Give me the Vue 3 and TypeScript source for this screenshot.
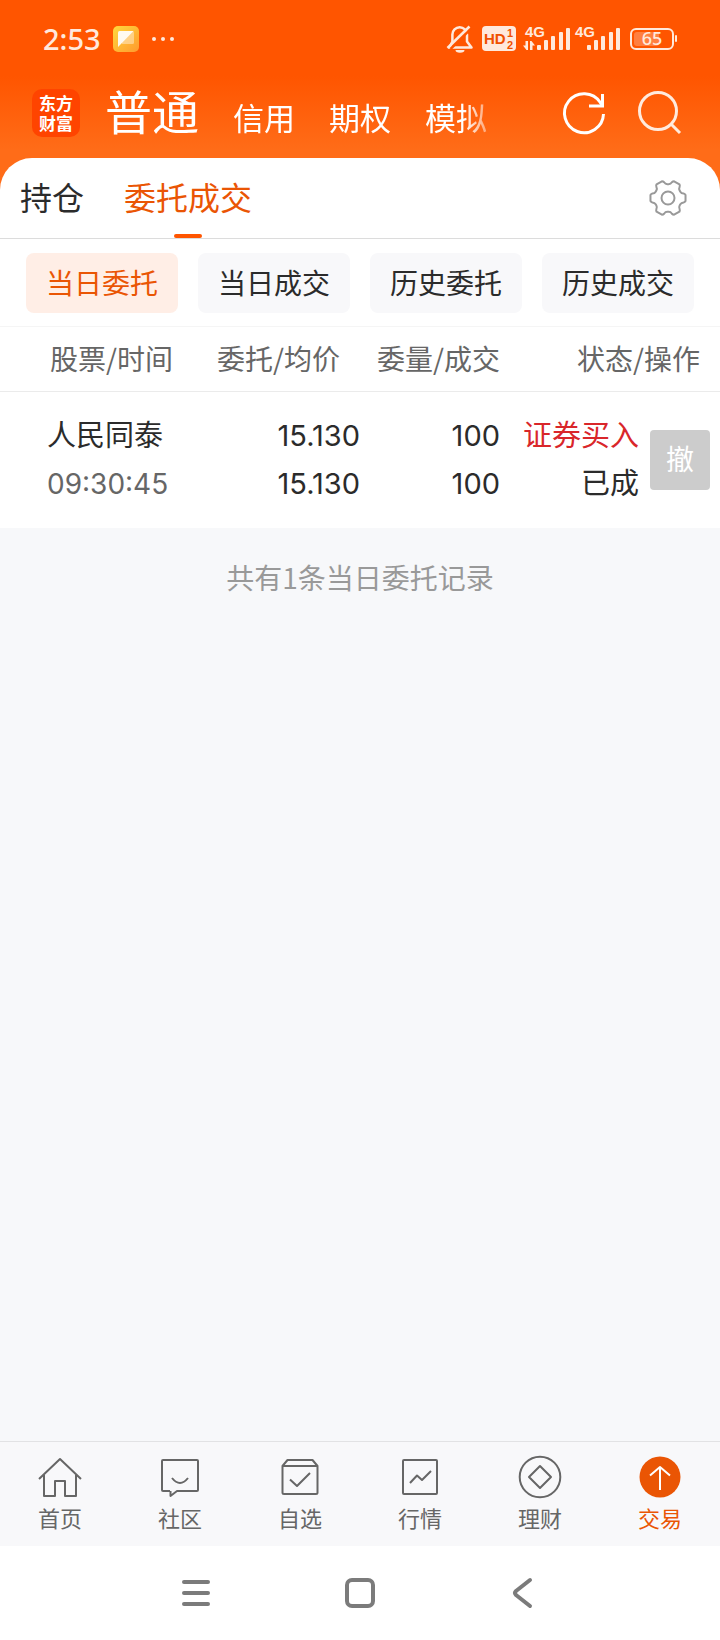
<script setup lang="ts">
import { ref } from 'vue'

interface Order {
  name: string
  time: string
  price: string
  average: string
  amount: number
  filled: number
  side: string
  status: string
}

const accounts: string[] = ['普通', '信用', '期权', '模拟']
const account = ref('普通')

const tabs: string[] = ['持仓', '委托成交']
const tab = ref('委托成交')

const filters: string[] = ['当日委托', '当日成交', '历史委托', '历史成交']
const filter = ref('当日委托')

const orders: Order[] = [
  {
    name: '人民同泰',
    time: '09:30:45',
    price: '15.130',
    average: '15.130',
    amount: 100,
    filled: 100,
    side: '证券买入',
    status: '已成',
  },
]

const bars = [
  { x: 91, h: 5 },
  { x: 98, h: 10 },
  { x: 105, h: 14 },
  { x: 113, h: 18 },
  { x: 120, h: 22 },
]

function polar(deg: number, r: number): string {
  const a = (deg * Math.PI) / 180
  return `${(20 + r * Math.cos(a)).toFixed(2)} ${(20 + r * Math.sin(a)).toFixed(2)}`
}

// Six flat-topped teeth joined by concave notches
function gearPath(): string {
  let d = `M${polar(-10, 17.8)}`
  for (let k = 0; k < 6; k++) {
    const a = k * 60
    d += `L${polar(a + 10, 17.8)}`
    d += `Q${polar(a + 14, 17.4)} ${polar(a + 16, 16.2)}`
    d += `C${polar(a + 20, 13.6)} ${polar(a + 25, 14)} ${polar(a + 30, 13.8)}`
    d += `C${polar(a + 35, 14)} ${polar(a + 40, 13.6)} ${polar(a + 44, 16.2)}`
    d += `Q${polar(a + 46, 17.4)} ${polar(a + 50, 17.8)}`
  }
  return d + 'Z'
}
const gear = gearPath()
</script>

<template>
  <div class="app">
    <header class="top">
      <div class="status">
        <span class="clock">2:53</span>
        <svg class="note" viewBox="0 0 26 26" aria-hidden="true">
          <defs>
            <linearGradient id="noteFill" x1="0" y1="0" x2="1" y2="1">
              <stop offset="0" stop-color="#ffd83d" />
              <stop offset="1" stop-color="#ff9a2e" />
            </linearGradient>
          </defs>
          <rect width="26" height="26" rx="5" fill="url(#noteFill)" />
          <path d="M6.500 5h13a1.500 1.500 0 0 1 1.500 1.500v10a1.500 1.500 0 0 1-1.500 1.500H9z" fill="#ffd9a0" fill-opacity=".75" />
          <path d="M6.500 5H20.500L5 21V6.500A1.500 1.500 0 0 1 6.500 5z" fill="#fffaf0" />
        </svg>
        <svg class="dots" viewBox="0 0 24 6" fill="#ffe9dc" aria-hidden="true">
          <circle cx="3" cy="3" r="2" /><circle cx="12" cy="3" r="2" /><circle cx="21" cy="3" r="2" />
        </svg>
        <svg class="indicators" viewBox="0 -6 232 40" aria-hidden="true">
          <g fill="none" stroke="#ffe9dc" stroke-width="2.500" stroke-linejoin="round">
            <path d="M3.500 22.500H25.500L21 16.500V9.500a7.300 7.300 0 0 0-14.600 0V16.500z" />
            <path d="M4.500 24L25.500 3" stroke="#ff5500" />
            <path d="M1.500 23L23.500 1.500" />
          </g>
          <path d="M9.500 25h9a4.500 2.800 0 0 1-9 0z" fill="#ffe9dc" />
          <rect x="36" y="1" width="34" height="25" rx="4" fill="#ffe9dc" />
          <g class="mark">
            <text x="38" y="19" font-size="15">HD</text>
            <text x="61" y="12" font-size="11">1</text>
            <text x="61" y="24" font-size="11">2</text>
          </g>
          <g class="light">
            <text x="79" y="12" font-size="15">4G</text>
            <text x="129" y="12" font-size="15">4G</text>
            <path d="M79.500 16H82V25H80.500L77 20.500H79.500z M84 16H85.500L89 20.500H86.500V25H84z" />
            <rect v-for="b in bars" :key="b.x" :x="b.x" :y="25 - b.h" width="4" :height="b.h" rx="1" />
            <rect v-for="b in bars" :key="b.x + 50" :x="b.x + 50" :y="25 - b.h" width="4" :height="b.h" rx="1" />
            <rect x="229" y="10" width="2" height="7" rx="1" />
          </g>
          <rect x="185" y="4" width="42" height="20" rx="5" fill="none" stroke="#ffe9dc" stroke-width="2" />
          <rect x="188" y="7" width="25" height="14" rx="3" fill="#fff" fill-opacity=".25" />
          <text class="charge" x="206" y="20" font-size="18" text-anchor="middle">65</text>
        </svg>
      </div>

      <div class="masthead">
        <div class="logo"><span>东方</span><span>财富</span></div>
        <nav class="accounts" aria-label="账户">
          <button
            v-for="a in accounts"
            :key="a"
            type="button"
            :class="{ current: a === account }"
            @click="account = a"
          >{{ a }}</button>
        </nav>
        <button class="tool" type="button" aria-label="刷新">
          <svg viewBox="0 0 48 48" fill="none" stroke="#fff" stroke-width="3">
            <path d="M43.500 24a19.500 19.500 0 1 1-3.200-11.500l2 2.500" />
            <path d="M42.500 4V16H29" />
          </svg>
        </button>
        <button class="tool" type="button" aria-label="搜索">
          <svg viewBox="0 0 48 48" fill="none" stroke="#ffeadd" stroke-width="3">
            <circle cx="22" cy="21" r="18.500" />
            <path d="M35 34L44 43" />
          </svg>
        </button>
      </div>
    </header>

    <main>
      <section class="panel">
        <div class="tabs">
          <button
            v-for="t in tabs"
            :key="t"
            type="button"
            class="tab"
            :class="{ current: t === tab }"
            @click="tab = t"
          >{{ t }}</button>
          <button class="settings" type="button" aria-label="设置">
            <svg viewBox="0 0 40 40" fill="none" stroke="#999" stroke-width="2" stroke-linejoin="round">
              <path :d="gear" />
              <circle cx="20" cy="20" r="6.500" />
            </svg>
          </button>
        </div>

        <div class="filters">
          <button
            v-for="f in filters"
            :key="f"
            type="button"
            :class="{ current: f === filter }"
            @click="filter = f"
          >{{ f }}</button>
        </div>

        <table>
          <thead>
            <tr>
              <th class="stock">股票/时间</th>
              <th class="price">委托/均价</th>
              <th class="amount">委量/成交</th>
              <th class="state">状态/操作</th>
            </tr>
          </thead>
          <tbody>
            <tr v-for="o in orders" :key="o.name + o.time">
              <td class="stock"><div>{{ o.name }}</div><div class="muted">{{ o.time }}</div></td>
              <td class="price"><div>{{ o.price }}</div><div>{{ o.average }}</div></td>
              <td class="amount"><div>{{ o.amount }}</div><div>{{ o.filled }}</div></td>
              <td class="state">
                <div class="action">
                  <div><div class="buy">{{ o.side }}</div><div>{{ o.status }}</div></div>
                  <button type="button" disabled>撤</button>
                </div>
              </td>
            </tr>
          </tbody>
        </table>
      </section>
      <p class="summary">共有{{ orders.length }}条当日委托记录</p>
    </main>

    <nav class="tabbar" aria-label="主导航">
      <a href="#home">
        <svg viewBox="0 0 44 44"><path d="M1 24L22 4L43 24M6 20V41H17V26H27V41H38V20" /></svg>
        <span>首页</span>
      </a>
      <a href="#community">
        <svg viewBox="0 0 44 44"><path d="M12 36H5a1 1 0 0 1-1-1V6a1 1 0 0 1 1-1H39a1 1 0 0 1 1 1V35a1 1 0 0 1-1 1H19L12.500 41V36M14 23Q22 33 30 23" /></svg>
        <span>社区</span>
      </a>
      <a href="#watchlist">
        <svg viewBox="0 0 44 44"><path d="M4.500 11L9.500 5H34.500L39.500 11V37.500a1.500 1.500 0 0 1-1.500 1.500H6a1.500 1.500 0 0 1-1.500-1.500zH39.500M12 24.500L19 31L32 18" /></svg>
        <span>自选</span>
      </a>
      <a href="#market">
        <svg viewBox="0 0 44 44"><rect x="5" y="5" width="34" height="34" rx="1" /><path d="M12 28L19 20.500L24 25L33 16" /></svg>
        <span>行情</span>
      </a>
      <a href="#wealth">
        <svg viewBox="0 0 44 44"><circle cx="22" cy="22" r="20.300" /><path d="M22 11L33 22L22 33L11 22z" /></svg>
        <span>理财</span>
      </a>
      <a href="#trade" class="current" aria-current="page">
        <svg viewBox="0 0 44 44"><circle class="disc" cx="22" cy="22" r="20.500" /><path class="arrow" d="M22 35V12M12 20.500L22 12L32 20.500" /></svg>
        <span>交易</span>
      </a>
    </nav>

    <div class="system">
      <button type="button" aria-label="最近任务">
        <svg viewBox="0 0 40 40"><path d="M8 9H32M8 20H32M8 31H32" /></svg>
      </button>
      <button type="button" aria-label="主屏幕">
        <svg viewBox="0 0 40 40"><rect x="7" y="7" width="26" height="26" rx="5" /></svg>
      </button>
      <button type="button" aria-label="返回">
        <svg viewBox="0 0 40 40"><path d="M26 7L12 18Q10 20 12 22L26 33" /></svg>
      </button>
    </div>
  </div>
</template>

<style>
body {
  background: #f7f8fa;
}
</style>

<style scoped>
.app {
  display: flex;
  flex-direction: column;
  min-height: 100vh;
  background: #f7f8fa;
  color: #2b2b2b;
  font-family: "Noto Sans CJK SC", sans-serif;
}

button {
  margin: 0;
  padding: 0;
  border: 0;
  background: none;
  color: inherit;
  font: inherit;
  cursor: pointer;
}

svg {
  display: block;
}

.top {
  padding-bottom: 32px;
  background: linear-gradient(#ff5500 76px, #ff6c18 150px);
  color: #fff;
}

.status {
  display: flex;
  align-items: center;
  height: 78px;
  padding: 0 42px 0 43px;
}

.clock {
  width: 70px;
  color: #ffe9dc;
  font: 500 29px/40px "Noto Sans", sans-serif;
}

.note {
  width: 26px;
  height: 26px;
}

.dots {
  width: 24px;
  height: 6px;
  margin-left: 12px;
}

.indicators {
  width: 232px;
  height: 40px;
  margin-left: auto;
  font-family: "Liberation Sans", sans-serif;
}

.light {
  fill: #ffe9dc;
  font-weight: 700;
}

.mark {
  fill: #f05000;
  font-weight: 700;
}

.charge {
  fill: #ffe9dc;
  font-family: "Noto Sans", sans-serif;
  font-weight: 500;
}

.masthead {
  display: flex;
  align-items: center;
  height: 80px;
  padding: 0 36px 0 32px;
}

.logo {
  display: flex;
  flex-direction: column;
  align-items: center;
  justify-content: center;
  width: 48px;
  height: 48px;
  margin-bottom: 10px;
  border-radius: 10px;
  background: #ff4400;
  font-size: 17px;
  font-weight: 700;
  line-height: 20px;
}

.accounts {
  display: flex;
  flex: 1;
  align-items: baseline;
  gap: 34px;
  margin: 0 68px 10px 25px;
  font-size: 31px;
  line-height: 60px;
  white-space: nowrap;
  mask-image: linear-gradient(90deg, #000 358px, transparent 400px);
}

.accounts .current {
  font-size: 47px;
}

.tool {
  width: 48px;
  height: 48px;
  margin-bottom: 8px;
}

.tool + .tool {
  margin-left: 28px;
}

main {
  flex: 1;
  margin-top: -32px;
}

.panel {
  border-radius: 32px 32px 0 0;
  background: #fff;
}

.tabs {
  display: flex;
  align-items: center;
  gap: 40px;
  height: 80px;
  padding: 0 32px 0 20px;
  border-bottom: 1px solid #dcdcdc;
}

.tab {
  position: relative;
  height: 80px;
  padding-bottom: 4px;
  font-size: 32px;
}

.tab.current {
  color: #ea5504;
}

.tab.current::after {
  content: "";
  position: absolute;
  bottom: 0;
  left: calc(50% - 14px);
  width: 28px;
  height: 4px;
  border-radius: 2px;
  background: #ff5500;
}

.settings {
  width: 40px;
  height: 40px;
  margin-left: auto;
}

.filters {
  display: grid;
  grid-template-columns: repeat(4, 1fr);
  gap: 20px;
  padding: 14px 26px 13px;
  border-bottom: 1px solid #f5f5f5;
}

.filters button {
  height: 60px;
  padding-bottom: 2px;
  border-radius: 8px;
  background: #f8f8fa;
  font-size: 28px;
}

.filters .current {
  background: #ffeee6;
  color: #ea5504;
}

table {
  width: 100%;
  border-collapse: collapse;
  table-layout: fixed;
}

th,
td {
  box-sizing: border-box;
  padding: 0;
  font-weight: 400;
  text-align: right;
  white-space: nowrap;
}

th {
  height: 64px;
  padding-bottom: 2px;
  border-bottom: 1px solid #ebebeb;
  color: #666;
  font-size: 28px;
  line-height: 40px;
}

td {
  padding: 20px 0;
  font: 29px/48px Inter, "Noto Sans CJK SC", sans-serif;
}

.stock {
  width: 28%;
  padding-left: 47px;
  text-align: left;
}

th.stock {
  padding-left: 50px;
}

.price {
  width: 22%;
}

th.price {
  padding-right: 20px;
}

.amount {
  width: 140px;
}

th.state {
  padding-right: 20px;
}

.muted {
  color: #666;
  font-size: 28px;
}

.buy {
  color: #d9262a;
}

.action {
  display: flex;
  align-items: center;
  justify-content: flex-end;
  gap: 11px;
  padding-right: 10px;
}

.action button {
  flex: none;
  width: 60px;
  height: 60px;
  border-radius: 4px;
  background: #ccc;
  color: #fff;
  font-size: 28px;
  line-height: 40px;
}

.summary {
  margin: 0;
  padding: 29px 0;
  color: #999;
  font-size: 28px;
  line-height: 40px;
  text-align: center;
}

.tabbar {
  display: grid;
  grid-template-columns: repeat(6, 1fr);
  padding: 13px 0 15px;
  border-top: 1px solid #e2e2e4;
  background: #f8f8fa;
}

.tabbar a {
  display: flex;
  flex-direction: column;
  align-items: center;
  gap: 4px;
  color: #666;
  font-size: 22px;
  line-height: 28px;
  text-decoration: none;
}

.tabbar svg {
  width: 44px;
  height: 44px;
  fill: none;
  stroke: #666;
  stroke-width: 2;
  stroke-linejoin: round;
}

.tabbar .current {
  color: #ea5504;
}

.tabbar .disc {
  fill: #ea5504;
  stroke: none;
}

.tabbar .arrow {
  stroke: #fff;
}

.system {
  display: flex;
  align-items: center;
  justify-content: center;
  gap: 124px;
  height: 94px;
  background: #fff;
}

.system svg {
  width: 40px;
  height: 40px;
  fill: none;
  stroke: #7b7b7b;
  stroke-width: 4;
  stroke-linecap: round;
  stroke-linejoin: round;
}
</style>
